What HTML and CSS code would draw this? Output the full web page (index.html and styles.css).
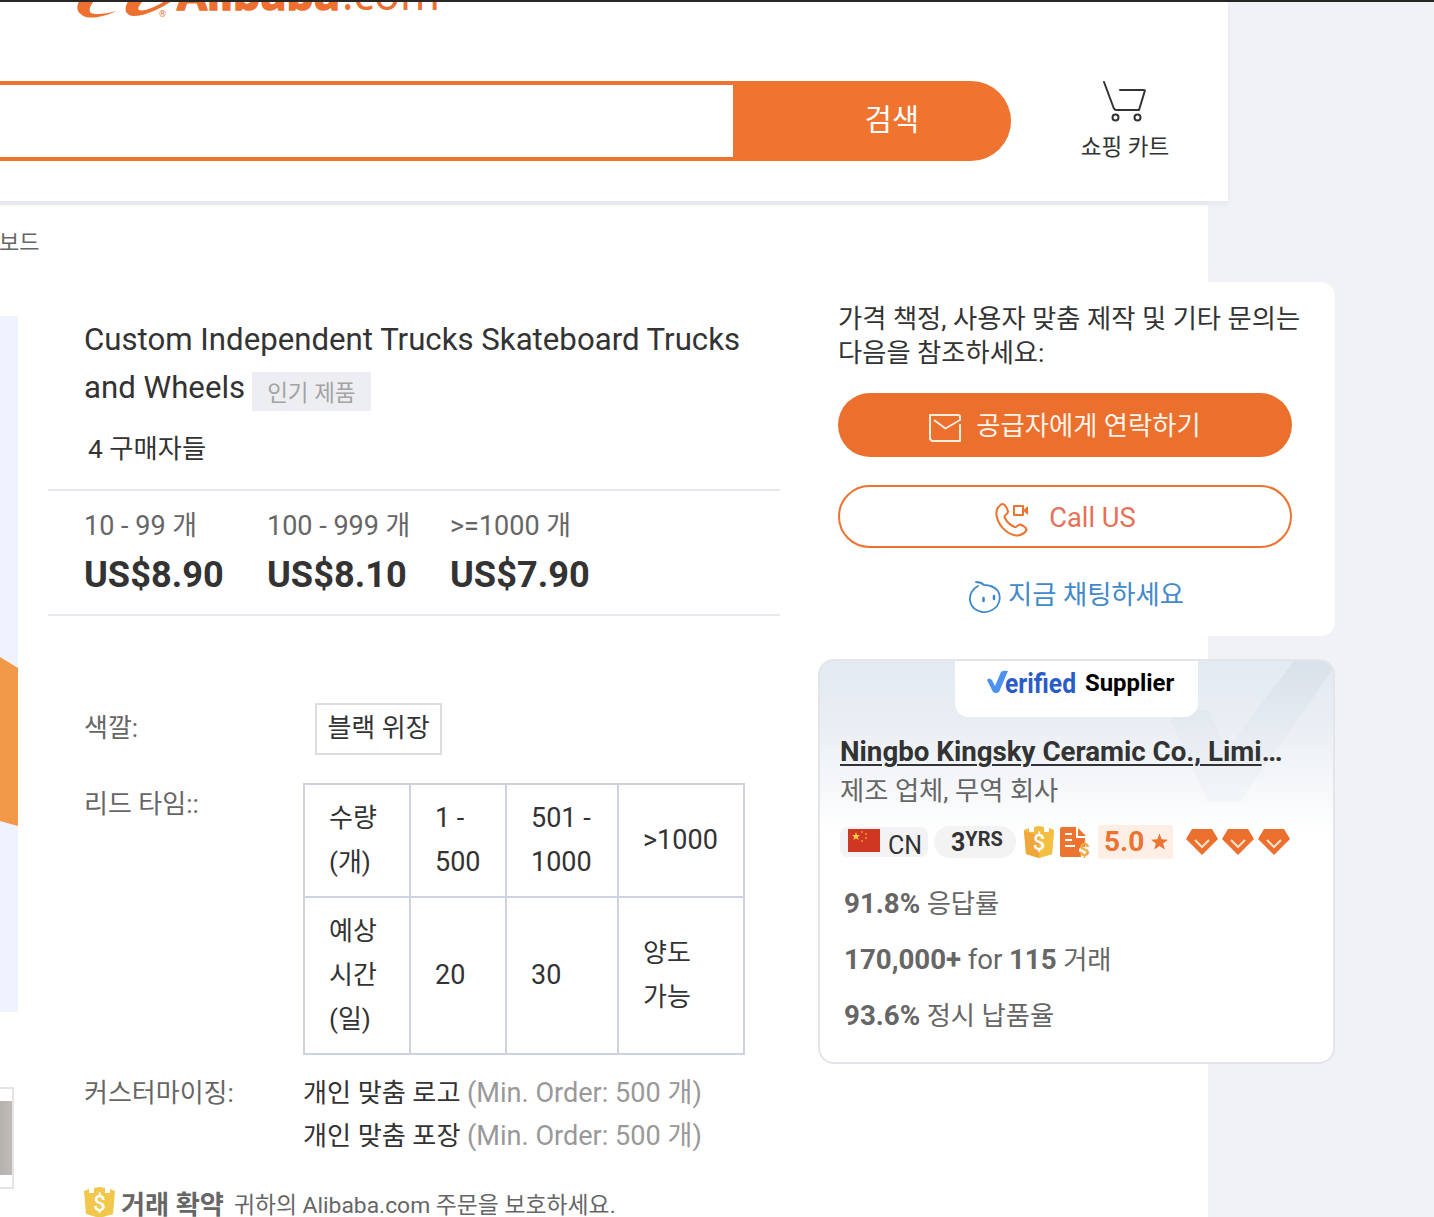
FILE: index.html
```html
<!DOCTYPE html>
<html lang="ko">
<head>
  <meta charset="UTF-8">
  <meta name="viewport" content="width=device-width, initial-scale=1.0">
  <title>Alibaba.com</title>
  <link rel="stylesheet" href="styles.css">
</head>
<body>
  <header class="header">
    <svg class="logo" width="440" height="18" viewBox="0 0 440 18">
      <g fill="#ee7030">
        <path d="M80 0C75 7 77 14 86 17C95 19 109 15 116 11C107 14 95 15 91 13C88 11 90 5 95 0Z"/>
        <path d="M129 0C123 9 125 15 133 16C146 16 162 8 173 0H166C156 7 143 12 139 10C137 8 140 4 144 0Z"/>
        <text class="logo_bold" x="177" y="10" textLength="163" lengthAdjust="spacingAndGlyphs">Alibaba</text>
        <text class="logo_light" x="342" y="10" textLength="98" lengthAdjust="spacingAndGlyphs">.com</text>
        <text class="logo_reg" x="159" y="17">®</text>
      </g>
    </svg>
    <div class="search_row">
      <div class="search">
        <div class="search_input"></div>
        <button class="search_btn">검색</button>
      </div>
      <a class="cart">
        <svg width="44" height="42" viewBox="0 0 44 42" fill="none" stroke="#333" stroke-width="2" stroke-linecap="round" stroke-linejoin="round">
          <path d="M1 1L10.500 26.500Q11.300 29 13.500 29H36L41.800 10Q42 9 40.800 9H17"/>
          <circle cx="12.500" cy="36.500" r="3"/>
          <circle cx="34.500" cy="36.500" r="3"/>
        </svg>
        <span>쇼핑 카트</span>
      </a>
    </div>
  </header>

  <main class="page">
    <nav class="breadcrumb">보드</nav>
    <div class="columns">
      <div class="gallery">
        <div class="photo">
          <svg width="18" height="696" viewBox="0 0 18 696">
            <path d="M0 341L18 352V510L0 505Z" fill="#f19849"/>
          </svg>
        </div>
        <div class="thumb"><div class="thumb_img"></div></div>
      </div>

      <section class="details">
        <h1>Custom Independent Trucks Skateboard Trucks<br>and Wheels <span class="tag">인기 제품</span></h1>
        <div class="buyers">4 구매자들</div>
        <div class="prices">
          <div class="price"><span>10 - 99 개</span><b>US$8.90</b></div>
          <div class="price"><span>100 - 999 개</span><b>US$8.10</b></div>
          <div class="price"><span>&gt;=1000 개</span><b>US$7.90</b></div>
        </div>
        <div class="row row_color">
          <div class="label">색깔:</div>
          <div class="option">블랙 위장</div>
        </div>
        <div class="row row_lead">
          <div class="label">리드 타임::</div>
          <table class="lead">
            <tr>
              <td class="c1">수량<br>(개)</td>
              <td class="c2 num">1 -<br>500</td>
              <td class="c3 num">501 -<br>1000</td>
              <td class="c4 num">&gt;1000</td>
            </tr>
            <tr>
              <td>예상<br>시간<br>(일)</td>
              <td class="num">20</td>
              <td class="num">30</td>
              <td>양도<br>가능</td>
            </tr>
          </table>
        </div>
        <div class="row row_custom">
          <div class="label">커스터마이징:</div>
          <div class="custom">
            <div>개인 맞춤 로고 <span>(Min. Order: 500 개)</span></div>
            <div>개인 맞춤 포장 <span>(Min. Order: 500 개)</span></div>
          </div>
        </div>
        <div class="assurance">
          <svg width="31" height="31" viewBox="0 0 31 31">
            <path d="M0 4L5 2V6H10V1L15.500 0L21 1V6H26V2L31 4L29 27L15.500 31L2 27Z" fill="#f1c84b"/>
            <text class="coin" x="15.500" y="24" text-anchor="middle">$</text>
          </svg>
          <b>거래 확약</b>
          <span>귀하의 Alibaba.com 주문을 보호하세요.</span>
        </div>
      </section>

      <aside class="sidebar">
        <div class="contact">
          <p>가격 책정, 사용자 맞춤 제작 및 기타 문의는<br>다음을 참조하세요:</p>
          <button class="btn btn_fill">
            <svg width="34" height="30" viewBox="0 0 34 30" fill="none" stroke="#ffecdc" stroke-width="2" stroke-linejoin="round">
              <path d="M32 11V28H4L2 26V2H30Q32 2 32 4V7L17.500 15.500L6 7"/>
            </svg>
            <span>공급자에게 연락하기</span>
          </button>
          <button class="btn btn_line">
            <svg width="34" height="34" viewBox="0 0 34 34" fill="none" stroke="#ec7430" stroke-width="2" stroke-linejoin="round">
              <path d="M6 1.500C2.500 4 1 8 1.500 12C3 22 11 31 21 32.500C25 33 31 30 31.500 26.500C31.500 25 28 22.500 25.500 21.500C23 21 21.500 25 19.500 24C15 22 11 17.500 9.500 14C9 12 13.500 11 13 8.500C12.500 6 10 1.500 8.500 1.200C7.500 1 7 1 6 1.500Z"/>
              <path d="M19 3H28V12H19Z"/>
              <path d="M28 7.500L33 3V12Z" fill="#ec7430" stroke="none"/>
            </svg>
            <span>Call US</span>
          </button>
          <a class="chat">
            <svg width="34" height="34" viewBox="0 0 34 34" fill="none" stroke="#4189cb" stroke-width="1.800" stroke-linecap="round">
              <path d="M8 2Q13 2 16 5Q25 5 30 11Q34 19 29 26Q23 33 14 32Q4 30 2 21Q1 11 10 6"/>
              <path d="M15.500 18V21M26 16V19" stroke-width="2.600"/>
            </svg>
            <span>지금 채팅하세요</span>
          </a>
        </div>

        <div class="supplier">
          <svg class="watermark" width="164" height="142" viewBox="0 0 164 142">
            <defs>
              <linearGradient id="wm" x1="0" y1="0" x2="0" y2="1">
                <stop offset="0" stop-color="#d9e1ea"/>
                <stop offset="1" stop-color="#f3f6f9"/>
              </linearGradient>
            </defs>
            <path d="M10 49H39L58 88L125 0H164V8L71 141H39L0 56Z" fill="url(#wm)"/>
          </svg>
          <div class="verified">
            <svg width="92" height="32" viewBox="0 0 92 32">
              <text class="verified_text" x="18" y="24" textLength="71" lengthAdjust="spacingAndGlyphs">erified</text>
              <path d="M0 11Q2 8 5 11L8 17L14 3Q16 1 21 2L12 23Q9 25 6 23Z" fill="#4d92f0"/>
            </svg>
            <b>Supplier</b>
          </div>
          <div class="company"><u>Ningbo Kingsky Ceramic Co., Limi</u><span>...</span></div>
          <div class="kind">제조 업체, 무역 회사</div>
          <div class="badges">
            <span class="country">
              <svg width="32" height="23" viewBox="0 0 32 23">
                <path d="M0 0H32V23H0Z" fill="#d03723"/>
                <path d="M8 3L9 6H12L9.800 8L10.600 11L8 9.200L5.400 11L6.200 8L4 6H7Z" fill="#f8cd45"/>
                <path d="M13 2H15V4H13ZM17 4H19V6H17ZM17 8H19V10H17ZM13 11H15V13H13Z" fill="#e08030"/>
              </svg>
              <span>CN</span>
            </span>
            <span class="years">3<sup>YRS</sup></span>
            <svg class="shield" width="30" height="32" viewBox="0 0 30 32">
              <path d="M0 4L5 2V6H10V1L15 0L20 1V6H25V2L30 4L28 28L15 32L2 28Z" fill="#f3bd41"/>
              <path d="M0 5L15 10V32L2 28Z" fill="#f0a63a"/>
              <path d="M15 10L30 5L28 28L15 32Z" fill="#f4c044"/>
              <text class="coin" x="15" y="24" text-anchor="middle">$</text>
            </svg>
            <svg class="doc" width="30" height="31" viewBox="0 0 30 31">
              <path d="M2 0H16V11H25V20Q19 19 19 24Q21 26 21 30H2Q0 30 0 28V2Q0 0 2 0Z" fill="#ec7430"/>
              <path d="M18 1L26 9H18Z" fill="#ec7430"/>
              <path d="M5 7H12M5 13H12M5 19H15" stroke="#fff" stroke-width="2"/>
              <text class="doc_coin" x="24.500" y="29" text-anchor="middle">$</text>
            </svg>
            <span class="score">5.0
              <svg width="17" height="18" viewBox="0 0 18 18"><path d="M9 0L11.300 6.200L18 6.500L12.800 10.600L14.600 17L9 13.300L3.400 17L5.200 10.600L0 6.500L6.700 6.200Z" fill="#ec7430"/></svg>
            </span>
            <span class="gems">
              <svg width="32" height="26" viewBox="0 0 32 26"><path d="M6 0H26L32 10L16 26L0 10Z" fill="#eb6f2d"/><path d="M9 11L16 18L23 11" fill="none" stroke="#ffe3cf" stroke-width="2"/></svg>
              <svg width="32" height="26" viewBox="0 0 32 26"><path d="M6 0H26L32 10L16 26L0 10Z" fill="#eb6f2d"/><path d="M9 11L16 18L23 11" fill="none" stroke="#ffe3cf" stroke-width="2"/></svg>
              <svg width="32" height="26" viewBox="0 0 32 26"><path d="M6 0H26L32 10L16 26L0 10Z" fill="#eb6f2d"/><path d="M9 11L16 18L23 11" fill="none" stroke="#ffe3cf" stroke-width="2"/></svg>
            </span>
          </div>
          <div class="stats">
            <div><b>91.8%</b> 응답률</div>
            <div><b>170,000+</b> <span>for</span> <b>115</b> 거래</div>
            <div><b>93.6%</b> 정시 납품율</div>
          </div>
        </div>
      </aside>
    </div>
  </main>
</body>
</html>
```
FILE: styles.css
```css
*{
  box-sizing: border-box;
}

body{
  margin: 0;
  height: 1217px;
  overflow: hidden;
  background-color: #f1f2f6;
  color: #333;
  font-family: Roboto, "Noto Sans CJK KR", sans-serif;
  font-size: 26px;
}

svg{
  display: block;
  flex-shrink: 0;
}

button{
  border: none;
  padding: 0;
  font-family: inherit;
}

/* header */
.header{
  position: relative;
  width: 1228px;
  height: 201px;
  background-color: white;
  box-shadow: 0 3px 4px #e6e7ed;
}

.header::before{
  content: "";
  position: absolute;
  top: 0;
  left: 0;
  width: 1434px;
  height: 2px;
  background-color: #262626;
}

.logo_bold{
  font: 700 44px "Noto Sans", sans-serif;
  stroke: #ee7030;
  stroke-width: 1.5px;
}

.logo_light{
  font: 400 44px "Noto Sans", sans-serif;
}

.logo_reg{
  font-size: 9px;
}

.search_row{
  display: flex;
  align-items: flex-start;
  margin-top: 63px;
}

.search{
  display: flex;
  width: 1011px;
  height: 80px;
  border: 4px solid #ee7430;
  border-left: none;
  border-right: none;
  border-radius: 0 40px 40px 0;
  background-color: #ee7430;
}

.search_input{
  width: 733px;
  background-color: white;
}

.search_btn{
  flex: 1;
  padding: 0 0 9px 40px;
  background: none;
  color: white;
  font-size: 29.500px;
}

.cart{
  display: flex;
  flex-direction: column;
  align-items: center;
  width: 90px;
  margin-left: 69px;
  font-size: 22.500px;
  line-height: 30px;
  white-space: nowrap;
}

.cart span{
  margin-top: 9px;
}

/* page */
.page{
  width: 1208px;
  height: 1016px;
  border-top: 4px solid #eaebf0;
  background-color: white;
}

.breadcrumb{
  height: 81px;
  padding-top: 22px;
  font-size: 22px;
  line-height: 32px;
  color: #666;
  text-indent: -1px;
}

.columns{
  display: flex;
  align-items: flex-start;
  margin-top: -4px;
}

.gallery{
  flex: none;
  width: 18px;
  padding-top: 34px;
}

.photo{
  height: 696px;
  background-color: #eff2ff;
}

.thumb{
  width: 14px;
  height: 102px;
  margin-top: 75px;
  padding: 12px 0;
  border: 2px solid #e4e4e4;
  border-left: none;
}

.thumb_img{
  height: 74px;
  background: linear-gradient(90deg, #b5b1ae, #c0bcba);
}

/* details */
.details{
  flex: none;
  width: 732px;
  margin-left: 30px;
  padding-top: 34px;
}

h1{
  margin: 0 0 0 36px;
  font-size: 31.200px;
  font-weight: 400;
  line-height: 48px;
  white-space: nowrap;
}

.tag{
  display: inline-block;
  width: 119px;
  height: 39px;
  margin-left: -1px;
  background-color: #edeef2;
  color: #a3a3a3;
  font-size: 22.500px;
  line-height: 42px;
  text-align: center;
  vertical-align: -3px;
}

.buyers{
  margin: 17px 0 0 40px;
  font-size: 26.300px;
  line-height: 40px;
}

.prices{
  display: flex;
  height: 127px;
  margin-top: 20px;
  padding: 15px 0 0 36px;
  border-top: 2px solid #e8e9ee;
  border-bottom: 2px solid #e8e9ee;
}

.price{
  width: 183px;
  color: #666;
  font-size: 27px;
  line-height: 40px;
  white-space: nowrap;
}

.price b{
  display: block;
  margin-top: 9px;
  color: #333;
  font-size: 36.200px;
}

.row{
  display: flex;
  padding-left: 36px;
}

.label{
  width: 219px;
  padding-top: 1px;
  color: #666;
  line-height: 40px;
}

.row_color{
  margin-top: 87px;
}

.row_color .label{
  padding-top: 5px;
}

.option{
  height: 52px;
  width: 127px;
  margin-left: 12px;
  border: 2px solid #ddd;
  line-height: 46px;
  text-align: center;
}

.row_lead{
  margin-top: 28px;
}

.lead{
  width: 442px;
  height: 272px;
  border-collapse: collapse;
  line-height: 44px;
}

.lead td{
  padding: 0 0 2px 24px;
  border: 2px solid #ccd2e2;
  height: 157px;
}

.lead tr:first-child td{
  height: 113px;
}

.lead .num{
  font-size: 27px;
}

.c1{ width: 106px; }
.c2{ width: 96px; }
.c3{ width: 112px; }
.c4{ width: 126px; }

.row_custom{
  margin-top: 17px;
}

.custom{
  font-size: 26.200px;
  line-height: 43px;
  white-space: nowrap;
}

.custom span{
  color: #999;
  font-size: 27.100px;
}

.assurance{
  display: flex;
  align-items: flex-start;
  margin: 29px 0 0 36px;
  color: #666;
  line-height: 34px;
  white-space: nowrap;
}

.assurance b{
  margin: 1px 10px 0 6px;
  font-size: 26.200px;
}

.assurance span{
  margin-top: 2px;
  font-size: 22.850px;
}

.coin{
  font-size: 22px;
  font-weight: 500;
  fill: white;
}

/* sidebar */
.sidebar{
  flex: none;
  width: 517px;
  margin: 0 0 0 38px;
  font-size: 26.300px;
}

.contact{
  height: 354px;
  padding: 20px 20px 0;
  border-radius: 14px;
  background-color: white;
}

.contact p{
  margin: 0 0 23px;
  line-height: 34px;
  white-space: nowrap;
}

.btn{
  display: flex;
  justify-content: center;
  align-items: center;
  width: 454px;
  height: 64px;
  border-radius: 32px;
  font-size: 26.300px;
}

.btn_fill{
  padding: 0 1px 3px 0;
  background-color: #eb6f2d;
  color: #fff4ea;
}

.btn_fill svg{
  margin: 8px 14px 0 0;
}

.btn_line{
  margin-top: 28px;
  height: 63px;
  padding: 2px 0 0 1px;
  border: 2px solid #ec7430;
  background-color: white;
  color: #e5715a;
  font-size: 27.300px;
}

.btn_line svg{
  margin: 4px 20px 0 0;
}

.chat{
  display: flex;
  justify-content: center;
  width: 476px;
  margin-top: 27px;
  color: #4189cb;
  line-height: 40px;
}

.chat svg{
  margin: 5px 6px 0 0;
}

.supplier{
  position: relative;
  height: 405px;
  margin-top: 23px;
  padding-left: 20px;
  border: 2px solid #e3e5e9;
  border-radius: 16px;
  background: linear-gradient(#e3eaf1, #e9eef4 60px, white 175px);
  overflow: hidden;
}

.watermark{
  position: absolute;
  top: 0;
  right: 0;
}

.verified{
  position: relative;
  display: flex;
  width: 243px;
  height: 56px;
  margin-left: 115px;
  padding: 8px 0 0 32px;
  border-radius: 0 0 14px 14px;
  background-color: white;
}

.verified b{
  margin-left: 6px;
  color: black;
  font-size: 23.900px;
  line-height: 29px;
}

.verified_text{
  font-size: 27px;
  font-weight: 700;
  fill: #2a5cc8;
}

.company{
  position: relative;
  margin-top: 16px;
  font-size: 27.700px;
  font-weight: 700;
  line-height: 38px;
  white-space: nowrap;
}

.company u{
  text-decoration-thickness: 2px;
  text-underline-offset: 3px;
}

.company span{
  letter-spacing: -1.5px;
}

.kind{
  position: relative;
  line-height: 40px;
  color: #666;
}

.badges{
  display: flex;
  align-items: center;
  height: 34px;
  margin-top: 14px;
}

.country{
  display: flex;
  gap: 8px;
  width: 88px;
  height: 30px;
  padding: 2px 0 0 8px;
  border-radius: 8px;
  background-color: #f3f3f5;
  font-size: 25px;
  line-height: 34px;
}

.years{
  width: 82px;
  height: 32px;
  margin: 0 8px 0 6px;
  padding-left: 17px;
  border-radius: 16px;
  background-color: #f3f3f4;
  font-size: 25px;
  font-weight: 700;
  line-height: 33px;
}

.years sup{
  font-size: 20px;
  line-height: 0;
  vertical-align: 5px;
}

.doc{
  margin-left: 6px;
}

.doc_coin{
  font-size: 19px;
  font-weight: 700;
  fill: #f3a93c;
}

.score{
  display: flex;
  align-items: center;
  gap: 7px;
  width: 75px;
  height: 34px;
  margin-left: 8px;
  padding: 0 0 1px 6px;
  border-radius: 3px;
  background-color: #fdefe5;
  color: #ec7430;
  font-size: 28px;
  font-weight: 700;
}

.gems{
  display: flex;
  gap: 4px;
  margin-left: 13px;
}

.stats{
  margin: 17px 0 0 4px;
  color: #666;
  line-height: 56px;
  white-space: nowrap;
}

.stats b{
  font-size: 27.700px;
}

.stats span{
  font-size: 27.600px;
}
```
